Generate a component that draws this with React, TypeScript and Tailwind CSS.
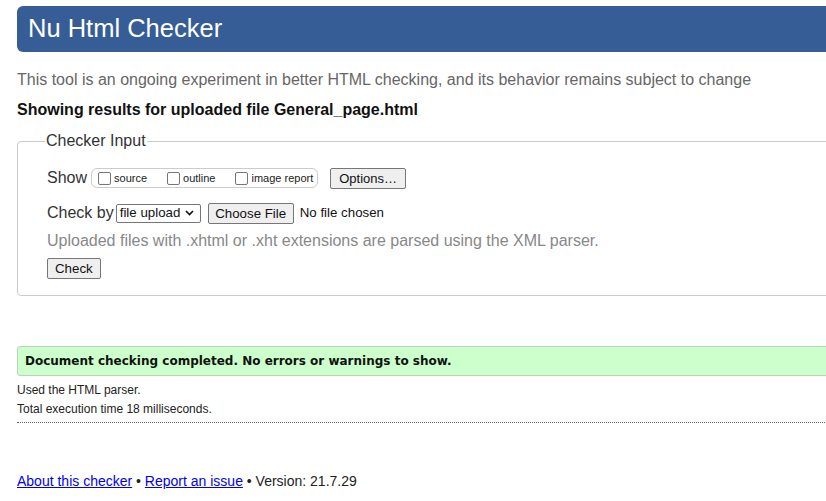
import React from "react";

const Box = () => (
  <span className="inline-block w-[13px] h-[13px] border border-[#767676] rounded-[2px] bg-white mr-[3px] align-[-2px]" />
);

export default function App() {
  return (
    <div className="w-[826px] h-[501px] overflow-hidden bg-white font-['Liberation_Sans',Arial,sans-serif] text-[#222]">
      <div className="ml-[17px] w-[860px] pt-[6px]">
        <div className="h-[46px] bg-[#365d96] rounded-l-[6px] flex items-center pl-[11px]">
          <h1 className="text-white text-[25.5px] leading-none">Nu Html Checker</h1>
        </div>
        <p className="mt-[18px] text-[16px] leading-[20px] text-[#666]">
          This tool is an ongoing experiment in better HTML checking, and its behavior remains subject to change
        </p>
        <p className="mt-[10px] text-[16px] leading-[20px] font-bold text-[#111]">
          Showing results for uploaded file General_page.html
        </p>
        <fieldset className="mt-[11px] border border-[#ccc] rounded-[4px] pl-[29px] pb-[15px] pt-0">
          <legend className="ml-[-2px] px-[1px] text-[16px] leading-[20px] text-[#333]">Checker Input</legend>
          <div className="mt-[16px] flex items-center h-[22px]">
            <span className="text-[16px] text-[#333]">Show</span>
            <span className="ml-[4px] flex items-center h-[20px] border border-[#ccc] rounded-[6px] pl-[6px] pr-[4px] text-[11px] text-[#222]">
              <Box />
              <span className="mr-[20px]">source</span>
              <Box />
              <span className="mr-[20px]">outline</span>
              <Box />
              <span>image report</span>
            </span>
            <button className="ml-[12px] h-[21px] px-[8px] border border-[#767676] rounded-[2px] bg-[#efefef] text-[13px] text-[#111]">
              Options…
            </button>
          </div>
          <div className="mt-[13px] flex items-center h-[22px]">
            <span className="text-[16px] text-[#333]">Check by</span>
            <span className="ml-[2px] h-[19px] w-[85px] border border-[#767676] rounded-[2px] bg-white flex items-center pl-[3px] text-[13.3px] text-[#111]">
              file upload
              <svg width="9" height="6" viewBox="0 0 9 6" className="ml-[5px]">
                <path d="M1 1 L4.5 4.5 L8 1" stroke="#111" strokeWidth="1.6" fill="none" />
              </svg>
            </span>
            <button className="ml-[7px] h-[21px] w-[86px] border border-[#767676] rounded-[2px] bg-[#efefef] text-[13.3px] text-[#111]">
              Choose File
            </button>
            <span className="ml-[6px] text-[13.3px] text-[#111]">No file chosen</span>
          </div>
          <p className="mt-[7px] text-[16px] leading-[20px] text-[#888]">
            Uploaded files with .xhtml or .xht extensions are parsed using the XML parser.
          </p>
          <button className="mt-[7px] h-[21px] px-[7px] border border-[#767676] rounded-[2px] bg-[#efefef] text-[13.3px] text-[#111] leading-none">
            Check
          </button>
        </fieldset>
        <div className="mt-[50px] h-[30px] bg-[#ccffcc] border border-[#b5d7b5] rounded-l-[3px] flex items-center pl-[7px]">
          <span className="font-['DejaVu_Sans',Verdana,sans-serif] font-bold text-[12px] text-[#111]">
            Document checking completed. No errors or warnings to show.
          </span>
        </div>
        <p className="mt-[5px] text-[12px] leading-[18px] text-[#222]">Used the HTML parser.</p>
        <p className="mt-[1px] text-[12px] leading-[18px] text-[#222]">Total execution time 18 milliseconds.</p>
        <div className="mt-[4px] border-t border-dotted border-[#666]" />
        <p className="mt-[49px] text-[14px] leading-[18px] text-[#222]">
          <a className="text-[#0000ee] underline" href="#">About this checker</a>
          {" • "}
          <a className="text-[#0000ee] underline" href="#">Report an issue</a>
          {" • Version: 21.7.29"}
        </p>
      </div>
    </div>
  );
}
